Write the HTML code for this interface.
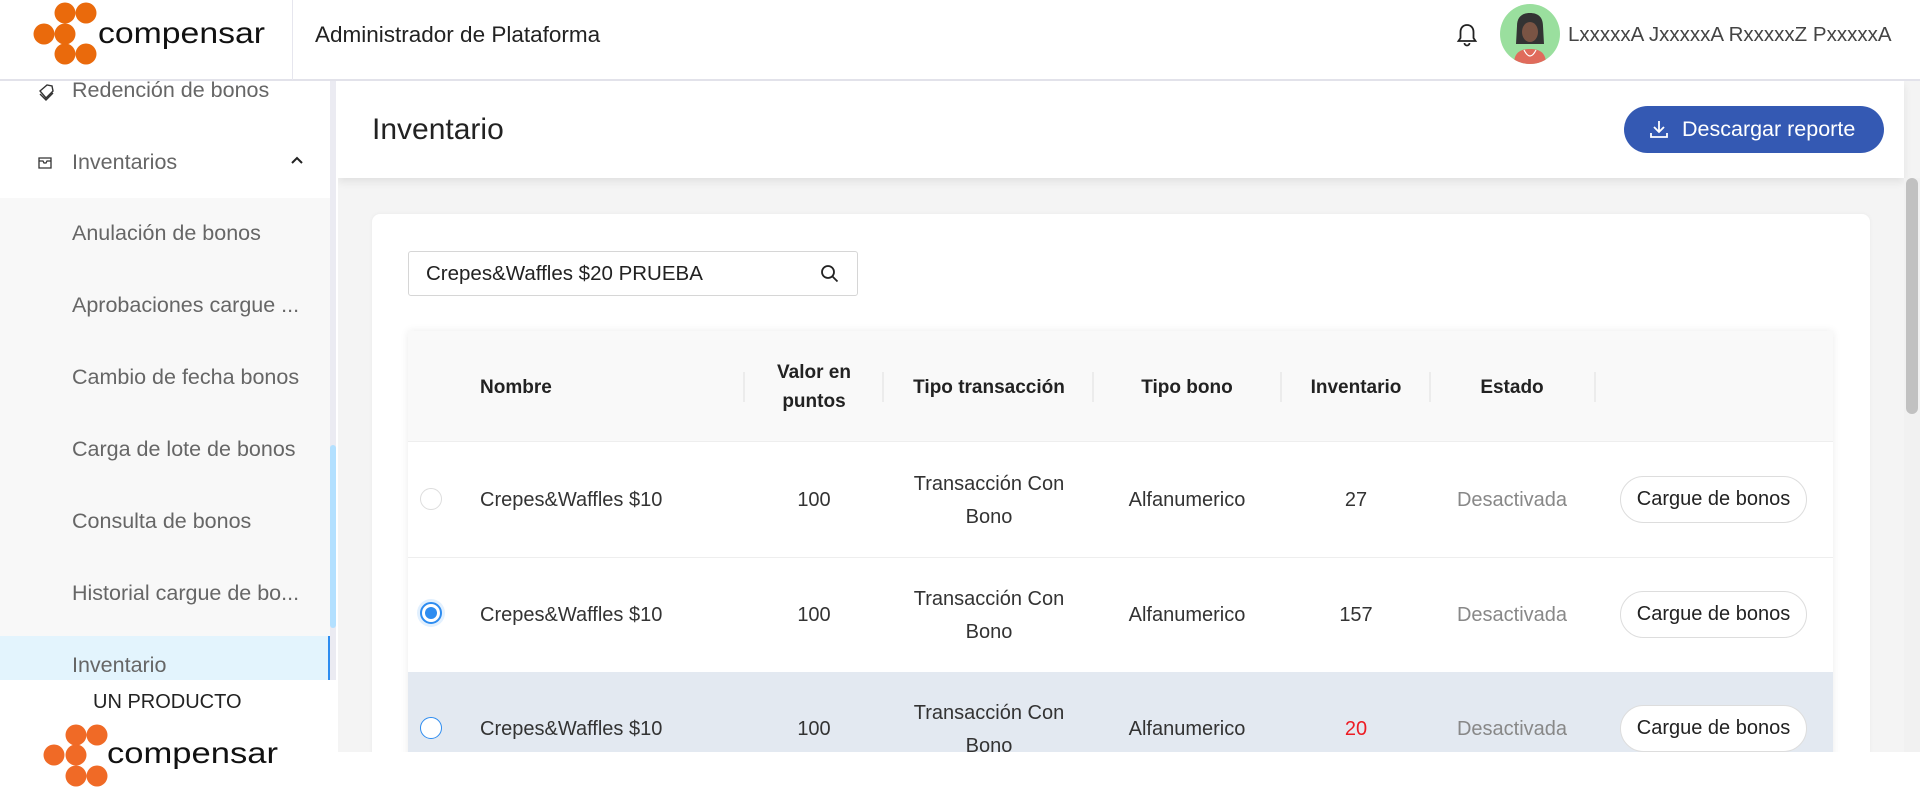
<!DOCTYPE html>
<html><head><meta charset="utf-8"><style>
*{box-sizing:border-box;margin:0;padding:0}
body{width:1920px;height:800px;overflow:hidden;background:#fff;font-family:"Liberation Sans",sans-serif;position:relative;color:#222}
.abs{position:absolute}
.top{left:0;top:0;width:1920px;height:81px;background:#fff;border-bottom:2px solid #e2e2ea}
.side{left:0;top:81px;width:336px;height:599px;background:#fff;overflow:hidden}
.sitem{position:absolute;left:72px;font-size:21.5px;color:#666;white-space:nowrap}
.main{left:338px;top:81px;width:1582px;height:671px;background:#f4f4f4;overflow:hidden}
.th{position:absolute;font-weight:bold;font-size:19px;color:#222;text-align:center;line-height:29px}
.td{position:absolute;font-size:20px;color:#333;text-align:center;line-height:33px}
.sep{position:absolute;top:41px;width:2px;height:30px;background:#ececec}
.btn{position:absolute;left:1212px;width:187px;height:47px;border:1.5px solid #ddd;border-radius:24px;background:#fff;font-size:20px;color:#222;text-align:center;line-height:44px}
</style></head><body>
<div class="abs top">
 <svg class="abs" style="left:0;top:0" width="290" height="80">
  <g fill="#ea6a0c"><circle cx="65" cy="13" r="10.5"/><circle cx="86" cy="13" r="10.5"/><circle cx="44" cy="34" r="10.5"/><circle cx="65" cy="34" r="10.5"/><circle cx="65" cy="54" r="10.5"/><circle cx="86" cy="54" r="10.5"/></g>
  <text x="98" y="43" font-family="Liberation Sans" font-size="30" fill="#111" textLength="167" lengthAdjust="spacingAndGlyphs">compensar</text>
 </svg>
 <div class="abs" style="left:292px;top:0;width:1px;height:80px;background:#e6e6ee"></div>
 <div class="abs" style="left:315px;top:22px;font-size:22.5px;color:#222">Administrador de Plataforma</div>
 <svg class="abs" style="left:1455px;top:22px" width="24" height="26" viewBox="0 0 24 26"><path d="M12 3c-4 0-6.5 3-6.5 7v6l-2 3h17l-2-3v-6c0-4-2.5-7-6.5-7z M9.5 21a2.5 2.5 0 0 0 5 0" fill="none" stroke="#222" stroke-width="1.8"/></svg>
 <svg class="abs" style="left:1500px;top:4px" width="60" height="60" viewBox="0 0 60 60">
  <circle cx="30" cy="30" r="30" fill="#9adf9e"/>
  <clipPath id="c"><circle cx="30" cy="30" r="30"/></clipPath>
  <g clip-path="url(#c)"><path d="M14 60c0-12 7-15 16-15s16 3 16 15z" fill="#e06b5c"/><path d="M17 22c0-9 5-13 13-13s13 4 13 13l1 18h-28z" fill="#333"/><ellipse cx="30" cy="28" rx="8" ry="10" fill="#7a5444"/><path d="M24 46q6 12 12 0" fill="none" stroke="#fff" stroke-width="1.2"/></g>
 </svg>
 <div class="abs" style="left:1568px;top:23px;font-size:20.5px;color:#444">LxxxxxA JxxxxxA RxxxxxZ PxxxxxA</div>
</div>
<div class="abs side">
 <svg class="abs" style="left:37px;top:2px" width="18" height="18" viewBox="0 0 18 18"><path d="M3 8l7-6 5 1 1 5-7 7z M3 11l6 6 7-7" fill="none" stroke="#333" stroke-width="1.4"/></svg>
 <div class="sitem" style="top:-3px">Redención de bonos</div>
 <svg class="abs" style="left:37px;top:73px" width="16" height="16" viewBox="0 0 16 16"><path d="M2 4h12v10H2z M2 7h4l1 2h2l1-2h4" fill="none" stroke="#333" stroke-width="1.3"/></svg>
 <div class="sitem" style="top:69px">Inventarios</div>
 <svg class="abs" style="left:290px;top:74px" width="14" height="10"><path d="M2 8l5-5 5 5" fill="none" stroke="#222" stroke-width="2"/></svg>
 <div class="abs" style="left:0;top:117px;width:330px;height:438px;background:#f8f8f8"></div>
 <div class="abs" style="left:0;top:555px;width:330px;height:44px;background:#e3f4fd;border-right:2px solid #2d8cf0"></div>
 <div class="abs" style="left:330px;top:0;width:6px;height:599px;background:#ebebf2"></div>
 <div class="abs" style="left:330px;top:364px;width:6px;height:183px;background:#b3e0ff;border-radius:3px"></div>
 <div class="sitem" style="top:140px">Anulación de bonos</div>
 <div class="sitem" style="top:212px">Aprobaciones cargue ...</div>
 <div class="sitem" style="top:284px">Cambio de fecha bonos</div>
 <div class="sitem" style="top:356px">Carga de lote de bonos</div>
 <div class="sitem" style="top:428px">Consulta de bonos</div>
 <div class="sitem" style="top:500px">Historial cargue de bo...</div>
 <div class="sitem" style="top:572px">Inventario</div>
</div>
<div class="abs" style="left:93px;top:691px;font-size:20px;color:#222">UN PRODUCTO</div>
<svg class="abs" style="left:0;top:710px" width="300" height="90">
 <g fill="#f06a26"><circle cx="76" cy="25" r="10.5"/><circle cx="97" cy="25" r="10.5"/><circle cx="54" cy="45" r="10.5"/><circle cx="76" cy="45" r="10.5"/><circle cx="76" cy="66" r="10.5"/><circle cx="97" cy="66" r="10.5"/></g>
 <text x="107" y="53" font-family="Liberation Sans" font-size="30" fill="#111" textLength="171" lengthAdjust="spacingAndGlyphs">compensar</text>
</svg>
<div class="abs main">
 <div class="abs" style="left:0;top:0;width:1566px;height:97px;background:#fff;box-shadow:0 4px 8px rgba(0,0,0,.08)"></div>
 <div class="abs" style="left:34px;top:32px;font-size:30px;color:#222">Inventario</div>
 <div class="abs" style="left:1286px;top:25px;width:260px;height:47px;background:#3459b3;border-radius:24px;color:#fff;font-size:21.5px;line-height:47px;padding-left:58px">Descargar reporte</div>
 <svg class="abs" style="left:1311px;top:38px" width="20" height="20"><path d="M10 2v11 M5 8l5 5 5-5 M2 14v4h16v-4" fill="none" stroke="#fff" stroke-width="1.8"/></svg>
 <div class="abs" style="left:1566px;top:97px;width:16px;height:574px;background:#f1f1f1"></div>
 <div class="abs" style="left:1568px;top:97px;width:12px;height:236px;background:#c1c1c1;border-radius:6px"></div>
 <div class="abs" style="left:34px;top:133px;width:1498px;height:600px;background:#fff;border-radius:8px;box-shadow:0 0 4px rgba(0,0,0,.05)">
  <div class="abs" style="left:36px;top:37px;width:450px;height:45px;border:1px solid #d6d6d6;border-radius:3px"></div>
  <div class="abs" style="left:54px;top:48px;font-size:20.5px;color:#222">Crepes&amp;Waffles $20 PRUEBA</div>
  <svg class="abs" style="left:448px;top:50px" width="20" height="20"><circle cx="8" cy="8" r="6" fill="none" stroke="#222" stroke-width="1.8"/><path d="M12.5 12.5l5 5" stroke="#222" stroke-width="1.8"/></svg>
  <div class="abs" style="left:36px;top:117px;width:1425px;height:500px;background:#fff;box-shadow:0 0 8px rgba(0,0,0,.08)">
   <div class="abs" style="left:0;top:0;width:1425px;height:111px;background:#f9f9f9;border-bottom:1px solid #eee"></div>
   <div class="th" style="left:72px;top:42px;text-align:left">Nombre</div>
   <div class="sep" style="left:335px"></div>
   <div class="th" style="left:336px;width:140px;top:27px">Valor en<br>puntos</div>
   <div class="sep" style="left:474px"></div>
   <div class="th" style="left:476px;width:210px;top:42px">Tipo transacción</div>
   <div class="sep" style="left:684px"></div>
   <div class="th" style="left:686px;width:186px;top:42px">Tipo bono</div>
   <div class="sep" style="left:872px"></div>
   <div class="th" style="left:874px;width:148px;top:42px">Inventario</div>
   <div class="sep" style="left:1021px"></div>
   <div class="th" style="left:1022px;width:164px;top:42px">Estado</div>
   <div class="sep" style="left:1186px"></div>
   <div class="abs" style="left:0;top:226px;width:1425px;height:1px;background:#eee"></div>
   <div class="abs" style="left:0;top:341px;width:1425px;height:200px;background:#e3e9f1"></div>
   <div class="abs" style="left:12px;top:157px;width:22px;height:22px;border:1px solid #ddd;border-radius:50%;background:#fff"></div>
   <div class="abs" style="left:9px;top:268px;width:28px;height:28px;border-radius:50%;background:#e2f0fe"></div>
   <div class="abs" style="left:12px;top:271px;width:22px;height:22px;border:2px solid #2d8cf0;border-radius:50%;background:#fff"></div>
   <div class="abs" style="left:17px;top:276px;width:12px;height:12px;border-radius:50%;background:#2d8cf0"></div>
   <div class="abs" style="left:12px;top:386px;width:22px;height:22px;border:1.5px solid #2d8cf0;border-radius:50%;background:#fff"></div>

   <div class="td" style="left:72px;top:153px;text-align:left">Crepes&amp;Waffles $10</div>
   <div class="td" style="left:336px;width:140px;top:153px">100</div>
   <div class="td" style="left:476px;width:210px;top:137px">Transacción Con<br>Bono</div>
   <div class="td" style="left:686px;width:186px;top:153px">Alfanumerico</div>
   <div class="td" style="left:874px;width:148px;top:153px">27</div>
   <div class="td" style="left:1022px;width:164px;top:153px;color:#888">Desactivada</div>
   <div class="btn" style="top:145px">Cargue de bonos</div>

   <div class="td" style="left:72px;top:268px;text-align:left">Crepes&amp;Waffles $10</div>
   <div class="td" style="left:336px;width:140px;top:268px">100</div>
   <div class="td" style="left:476px;width:210px;top:252px">Transacción Con<br>Bono</div>
   <div class="td" style="left:686px;width:186px;top:268px">Alfanumerico</div>
   <div class="td" style="left:874px;width:148px;top:268px">157</div>
   <div class="td" style="left:1022px;width:164px;top:268px;color:#888">Desactivada</div>
   <div class="btn" style="top:260px">Cargue de bonos</div>

   <div class="td" style="left:72px;top:382px;text-align:left">Crepes&amp;Waffles $10</div>
   <div class="td" style="left:336px;width:140px;top:382px">100</div>
   <div class="td" style="left:476px;width:210px;top:366px">Transacción Con<br>Bono</div>
   <div class="td" style="left:686px;width:186px;top:382px">Alfanumerico</div>
   <div class="td" style="left:874px;width:148px;top:382px;color:#ed1c24">20</div>
   <div class="td" style="left:1022px;width:164px;top:382px;color:#888">Desactivada</div>
   <div class="btn" style="top:374px">Cargue de bonos</div>
  </div>
 </div>
</div>
</body></html>
